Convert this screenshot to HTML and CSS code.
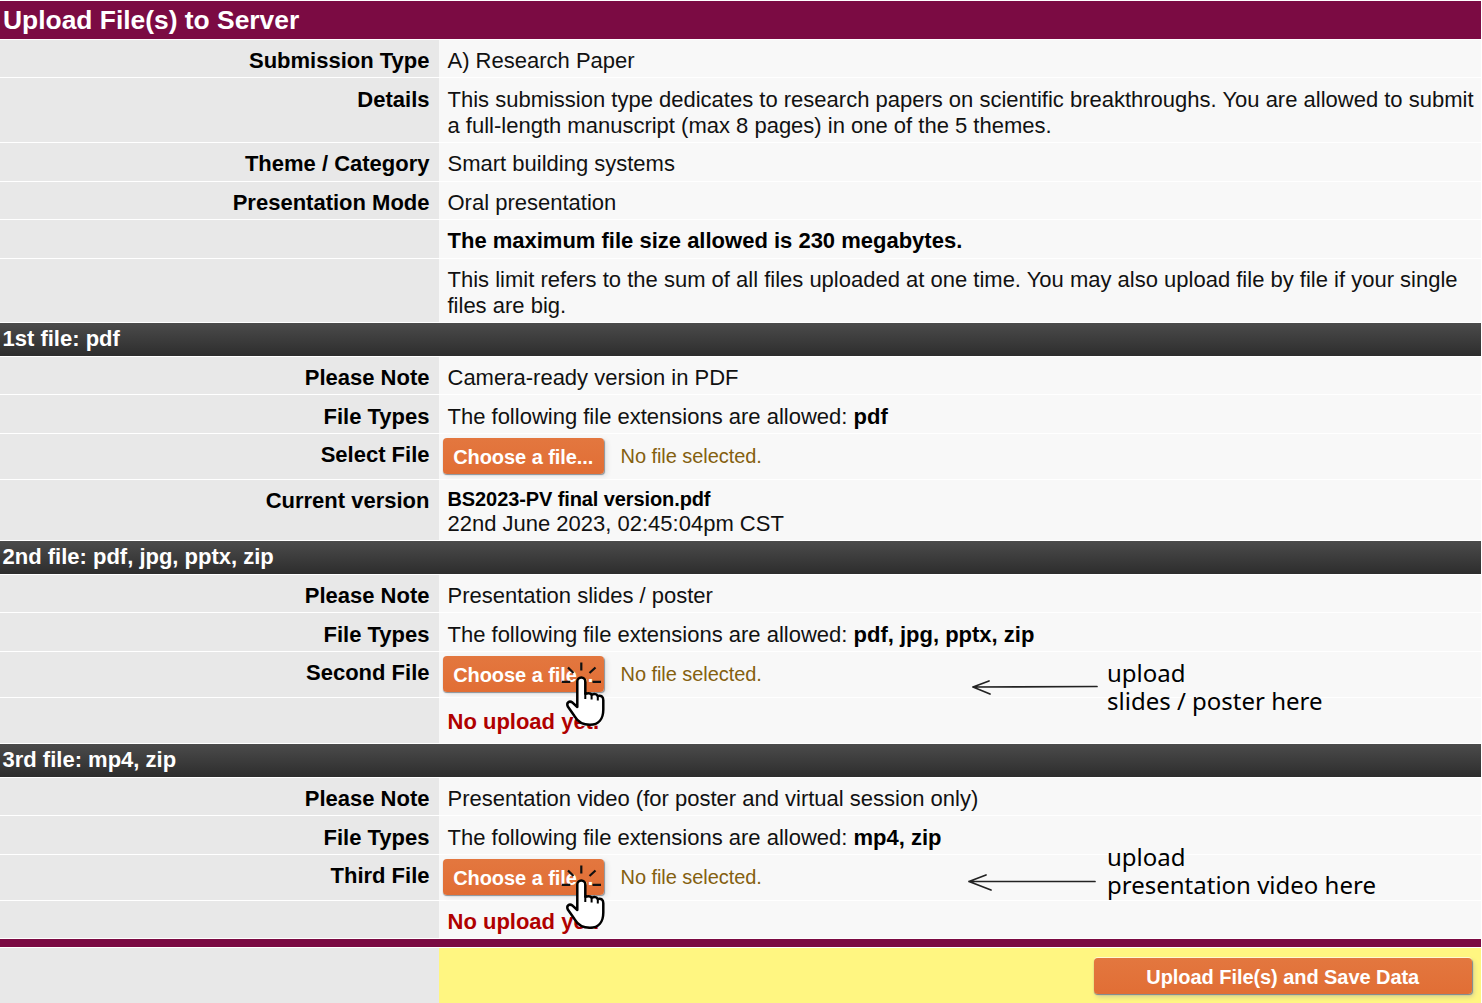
FILE: index.html
```html
<!DOCTYPE html>
<html lang="en">
<head>
<meta charset="utf-8">
<title>Upload File(s) to Server</title>
<link rel="stylesheet" href="styles.css">
</head>
<body>
<svg class="defs" aria-hidden="true">
  <symbol id="hand" viewBox="0 0 46 67">
    <path d="M20.300 1.500v8M7 6.500l5.500 5.500M34.500 6.500l-6 5.500M.8 20.900h8.500M31.500 20.900h8.500" fill="none" stroke="#111" stroke-width="2.200"/>
    <path d="M16.300 46V20.500a4 4 0 0 1 8 0v12.300c3-1 5.400-.5 6.200 .9 3-1 5.500-.3 6.200 1.300 3.800-.8 5.600 .8 5.600 4.200V48.500c0 9.500-4.800 15.300-13.300 15.300-7.800 0-12.700-3.800-15.700-9L6.800 45.500c-1.700-3.800 1.500-6.200 4.700-3.900z" fill="#fff" stroke="#000" stroke-width="2.500" stroke-linejoin="round"/>
    <path d="M24.300 32v6M30.600 33.500v5M36.800 35v4.500" stroke="#000" stroke-width="2" fill="none"/>
  </symbol>
</svg>
<main class="form">
  <h1 class="title">Upload File(s) to Server</h1>
  <div class="row h37"><div class="label">Submission Type</div><div class="value">A) Research Paper</div></div>
  <div class="row h64 low"><div class="label">Details</div><div class="value">This submission type dedicates to research papers on scientific breakthroughs. You are allowed to submit<br>a full-length manuscript (max 8 pages) in one of the 5 themes.</div></div>
  <div class="row h38"><div class="label">Theme / Category</div><div class="value">Smart building systems</div></div>
  <div class="row h37"><div class="label">Presentation Mode</div><div class="value">Oral presentation</div></div>
  <div class="row h38"><div class="label"></div><div class="value"><b>The maximum file size allowed is 230 megabytes.</b></div></div>
  <div class="row h63"><div class="label"></div><div class="value">This limit refers to the sum of all files uploaded at one time. You may also upload file by file if your single<br>files are big.</div></div>

  <h2 class="section">1st file: pdf</h2>
  <div class="row h37"><div class="label">Please Note</div><div class="value">Camera-ready version in PDF</div></div>
  <div class="row h38 low"><div class="label">File Types</div><div class="value">The following file extensions are allowed: <b>pdf</b></div></div>
  <div class="row h45"><div class="label">Select File</div><div class="value picker"><button class="btn choose">Choose a file...</button><span class="none">No file selected.</span></div></div>
  <div class="row h60"><div class="label">Current version</div><div class="value version"><b class="filename">BS2023-PV final version.pdf</b><span>22nd June 2023, 02:45:04pm CST</span></div></div>

  <h2 class="section">2nd file: pdf, jpg, pptx, zip</h2>
  <div class="row h37"><div class="label">Please Note</div><div class="value">Presentation slides / poster</div></div>
  <div class="row h38 low"><div class="label">File Types</div><div class="value">The following file extensions are allowed: <b>pdf, jpg, pptx, zip</b></div></div>
  <div class="row h45"><div class="label">Second File</div><div class="value picker"><button class="btn choose">Choose a file...</button><span class="none">No file selected.</span>
    <svg class="pointer"><use href="#hand"/></svg>
    <svg class="arrow arrow-a" viewBox="0 0 127 16"><path d="M1 8L125 7.500M1 8L17 2M1 8L18 15" /></svg>
    <p class="hint hint-a">upload<br>slides / poster here</p>
  </div></div>
  <div class="row h45"><div class="label"></div><div class="value missing missing-low">No upload yet.</div></div>

  <h2 class="section">3rd file: mp4, zip</h2>
  <div class="row h37"><div class="label">Please Note</div><div class="value">Presentation video (for poster and virtual session only)</div></div>
  <div class="row h38 low"><div class="label">File Types</div><div class="value">The following file extensions are allowed: <b>mp4, zip</b></div></div>
  <div class="row h45"><div class="label">Third File</div><div class="value picker"><button class="btn choose">Choose a file...</button><span class="none">No file selected.</span>
    <svg class="pointer"><use href="#hand"/></svg>
    <svg class="arrow arrow-b" viewBox="0 0 129 18"><path d="M1 8.500L127 8.500M1 8.500L18 2M1 8.500L23 17" /></svg>
    <p class="hint hint-b">upload<br>presentation video here</p>
  </div></div>
  <div class="row h37"><div class="label"></div><div class="value missing">No upload yet.</div></div>
  <div class="rule"></div>
  <div class="row footer"><div class="label"></div><div class="value submit"><button class="btn save">Upload File(s) and Save Data</button></div></div>
</main>
</body>
</html>
```
FILE: styles.css
```css
* { box-sizing: border-box; }
html { overflow: hidden; background: #fff; }
body { margin: 0; font: 22px/26px "Liberation Sans", Arial, sans-serif; color: #111; }
.defs { position: absolute; width: 0; height: 0; }
.form { display: flex; flex-direction: column; gap: 1px; width: 1481px; padding-top: 1px; }
.title { margin: 0; height: 38px; padding-left: 3px; background: #7b0b43; color: #fff; font-size: 26.4px; line-height: 38px; }
.section { margin: 0; height: 33px; padding-left: 2.500px; background: linear-gradient(#4b4b4b, #2d2d2d); color: #fff; font-size: 22px; line-height: 32px; }
.row { display: grid; grid-template-columns: 439px 1fr; }
.label { padding: 8px 9.500px 0 0; background: #e8e8e8; font-weight: bold; text-align: right; color: #000; }
.value { position: relative; padding: 8px 0 0 8.500px; background: #f8f8f8; white-space: nowrap; }
.low > .label, .low > .value { padding-top: 9px; }
.value b { color: #000; }
.h37 { height: 37px; }
.h38 { height: 38px; }
.h45 { height: 45px; }
.h60 { height: 60px; }
.h63 { height: 63px; }
.h64 { height: 64px; }
.picker { display: flex; align-items: flex-start; gap: 17px; padding: 4px 0 0 4px; }
.btn { padding: 0; border: 0; border-radius: 4px; background: linear-gradient(#e3773f, #e16e35); box-shadow: .5px 1px 1px #8b9298, 3px 2px 5px #e2e2e2; color: #fff; font: bold 20px/38px "Liberation Sans", Arial, sans-serif; letter-spacing: -.06px; }
.choose { width: 160.500px; height: 36px; }
.none { padding-top: 5px; color: #84600f; font-size: 20px; letter-spacing: -.06px; }
.version { display: flex; flex-direction: column; padding-top: 7px; line-height: 24px; }
.version span { line-height: 26px; }
.filename { font-size: 20px; letter-spacing: -.1px; }
.missing { color: #b00000; font-weight: bold; }
.missing-low { padding-top: 11px; }
.pointer { position: absolute; left: 121.500px; top: 9px; width: 46px; height: 67px; z-index: 2; }
.arrow { position: absolute; z-index: 2; fill: none; stroke: #222; stroke-width: 1.700; stroke-linecap: round; stroke-linejoin: round; }
.arrow-a { left: 533px; top: 26.500px; width: 127px; height: 16px; }
.arrow-b { left: 529px; top: 18px; width: 129px; height: 18px; }
.hint { position: absolute; z-index: 2; left: 668px; margin: 0; color: #000; font: 24px/28px "Noto Sans", sans-serif; }
.hint-a { top: 7px; }
.hint-b { top: -12px; }
.rule { height: 8px; background: #7b0b43; }
.footer { height: 55px; }
.submit { display: flex; justify-content: flex-end; align-items: flex-start; padding: 10px 9px 0; background: #fff681; }
.save { width: 378.500px; height: 36px; box-shadow: .5px 1px 1px #7c8790, 0 -1px 0 #fffbd0, 2px 3px 5px #d5cf90; }
```
